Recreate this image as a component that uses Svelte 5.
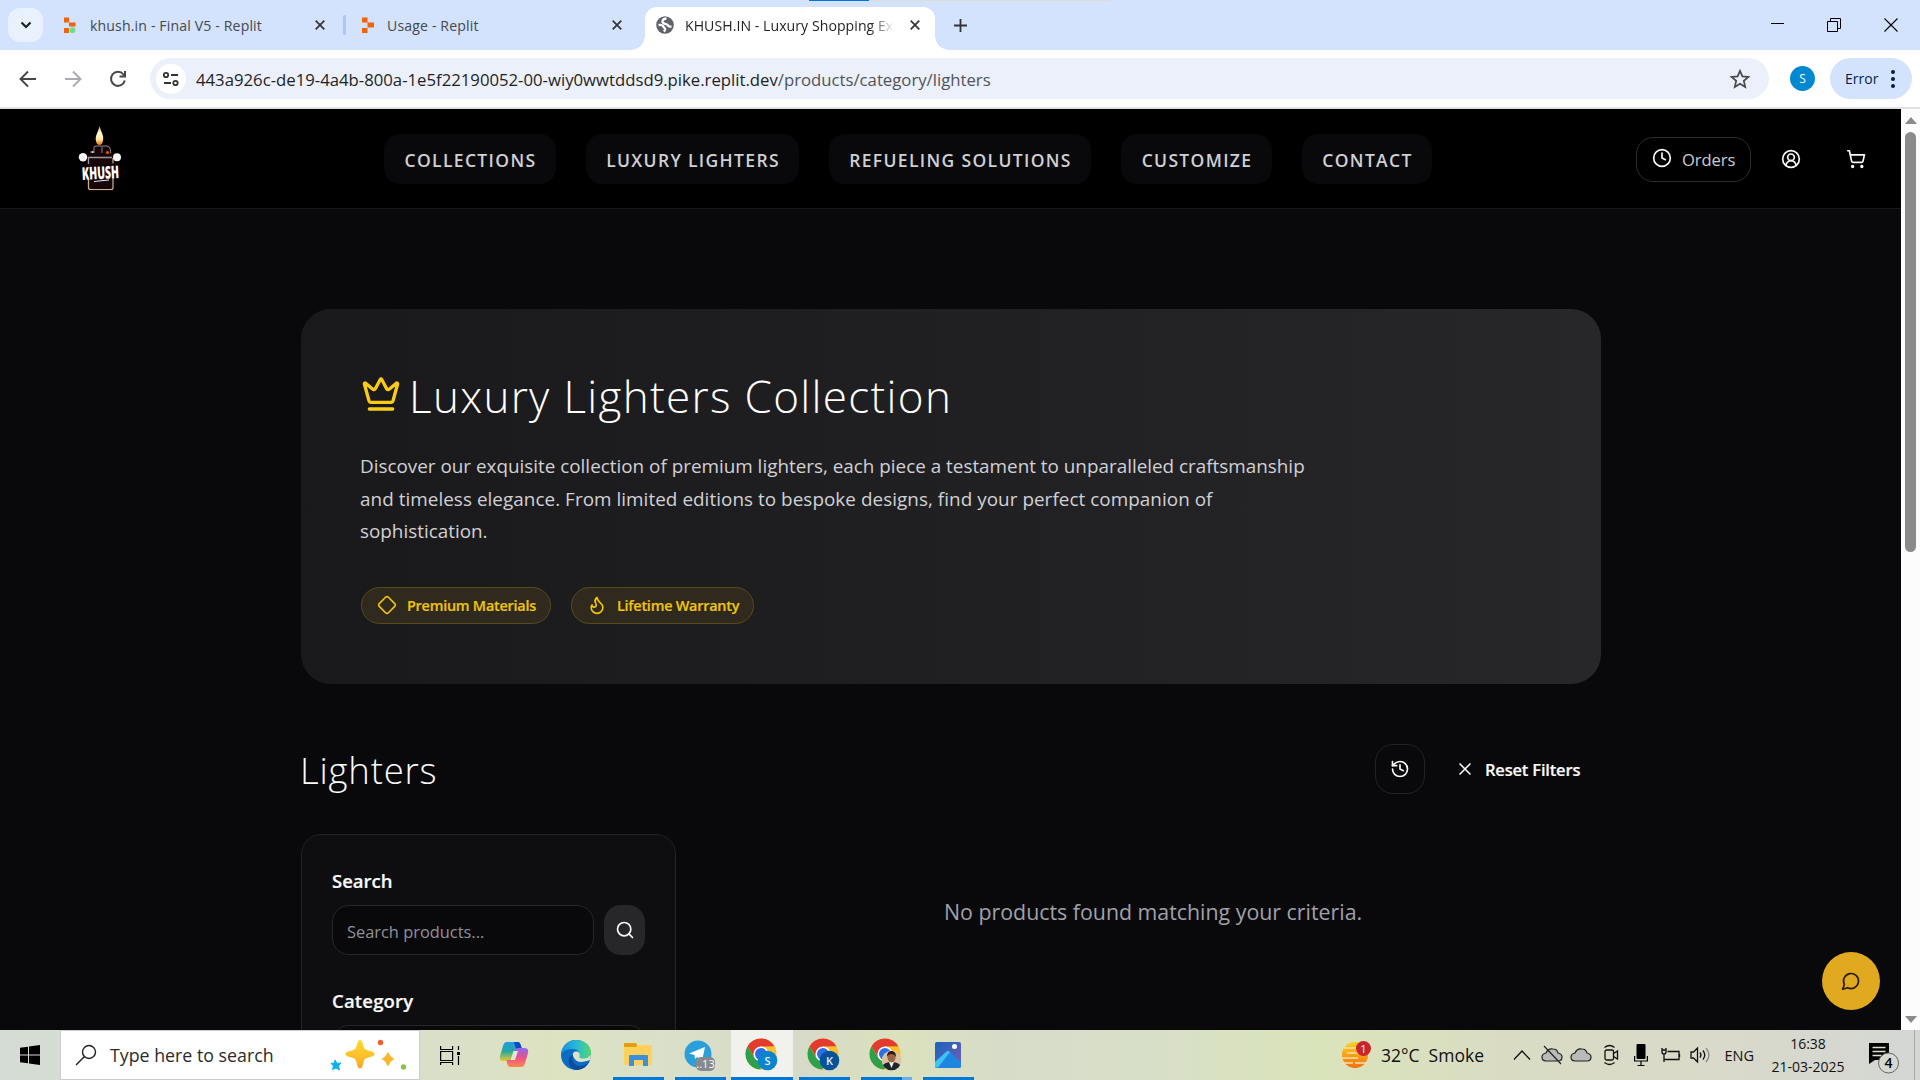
<script>
  const nav = [
    ['COLLECTIONS', 'n1'],
    ['LUXURY LIGHTERS', 'n2'],
    ['REFUELING SOLUTIONS', 'n3'],
    ['CUSTOMIZE', 'n4'],
    ['CONTACT', 'n5']
  ];
</script>

{#snippet closeIcon(cls)}
  <svg class={cls} width="10" height="10" viewBox="0 0 10 10"><path d="M.7.7l8.6 8.6M9.3.7L.7 9.3" stroke="currentColor" stroke-width="1.7" fill="none" /></svg>
{/snippet}

{#snippet chrome(id)}
  <svg width="34" height="34" viewBox="0 0 34 34">
    <circle cx="16" cy="16" r="15.5" fill="#fbc02d" />
    <path d="M2.6 8.2A15.5 15.5 0 0 1 29.4 8.2L16 8.5 9.4 20z" fill="#e33b2e" />
    <path d="M2.6 8.2L9.3 20 16 24l-.5 7.5A15.5 15.5 0 0 1 2.6 8.2z" fill="#2da04b" />
    <circle cx="16" cy="16" r="7.6" fill="#fff" />
    <circle cx="16" cy="16" r="6" fill="#2a6fe8" />
    {#if id === 'photo'}
      <defs><clipPath id="face"><circle cx="22.500" cy="22.500" r="9.800" /></clipPath></defs>
      <g clip-path="url(#face)">
        <rect x="12" y="12" width="21" height="21" fill="#d9c3a2" />
        <path d="M12 33c0-7 5-9 10.500-9s10.500 2 10.500 9z" fill="#20242c" />
        <path d="M20 24l2.500 6 2.500-6z" fill="#f2f2f2" />
        <ellipse cx="22.500" cy="19.500" rx="4" ry="5" fill="#9a6446" />
        <path d="M18 19c-.5-8 9.500-8 9 0-1.500-4-7.500-4-9 0z" fill="#231a16" />
      </g>
    {:else}
      <circle cx="22.500" cy="22.500" r="9.800" fill={id === 'S' ? '#0b84cf' : '#07529a'} />
      <text x="22.500" y="26.600" text-anchor="middle" font-size="11" font-weight="600" fill="#e5f3ff">{id}</text>
    {/if}
  </svg>
{/snippet}

<div class="screen">
  <header class="tabs">
    <button class="tabsearch" aria-label="Search tabs"><svg width="12" height="8" viewBox="0 0 12 8"><path d="M1.500 1.500L6 6l4.500-4.500" fill="none" stroke="#1f1f1f" stroke-width="2.200" /></svg></button>
    <div class="tab first">
      <svg width="14" height="17" viewBox="0 0 14 17"><path d="M1 .5h5v5h6.500v4H6V5.500H1zM1 11h5v5H1z" fill="#f26207" /><circle cx="9.500" cy="13.200" r="2.900" fill="#6fdc8c" /></svg>
      <span class="t1">khush.in - Final V5 - Replit</span>
      {@render closeIcon('x')}
    </div>
    <i class="divider"></i>
    <div class="tab second">
      <svg width="14" height="17" viewBox="0 0 14 17"><path d="M1 .5h5.500v5H13v5H6.500v5.500H1V11h5.500V5.500H1z" fill="#f26207" /></svg>
      <span class="t2">Usage - Replit</span>
      {@render closeIcon('x')}
    </div>
    <div class="tab active">
      <svg width="18" height="18" viewBox="0 0 18 18"><circle cx="9" cy="9" r="8.800" fill="#5f6368" /><path d="M10.500 2.500C8 2.500 6 4 6.500 6s3 1.500 4.500 2.500 1 2.500 4.500 2M2.500 9c2.500-.3 4.500.3 5 1.800.3 1.200 2 1.200 1.700 2.700-.2 1-.8 1.500-1.500 2" fill="none" stroke="#fff" stroke-width="2.300" /></svg>
      <span class="t3">KHUSH.IN - Luxury Shopping Ex</span>
      {@render closeIcon('x')}
    </div>
    <svg class="plus" width="13" height="13" viewBox="0 0 13 13"><path d="M6.500 0v13M0 6.500h13" stroke="#333" stroke-width="1.800" /></svg>
    <div class="win">
      <svg width="14" height="14" viewBox="0 0 14 14"><path d="M1 5.500h13" stroke="#000" /></svg>
      <svg width="14" height="14" viewBox="0 0 14 14" fill="none" stroke="#000"><path d="M.5 3.500h10v10H.5zM3.500 3V.5h10v10H11" /></svg>
      <svg width="14" height="14" viewBox="0 0 14 14"><path d="M.5.5l13 13M13.500.5l-13 13" stroke="#000" stroke-width="1.100" /></svg>
    </div>
    <i class="load"></i>
  </header>

  <div class="toolbar">
    <div class="navbtns">
      <svg width="18" height="18" viewBox="0 0 18 18" fill="none" stroke="#474747" stroke-width="1.900"><path d="M17 9H2M9 1.500L1.500 9 9 16.500" /></svg>
      <svg width="18" height="18" viewBox="0 0 18 18" fill="none" stroke="#a9abae" stroke-width="1.900"><path d="M1 9h15M9 1.500L16.500 9 9 16.500" /></svg>
      <svg width="18" height="18" viewBox="0 0 18 18" fill="none" stroke="#474747" stroke-width="2"><path d="M15.800 10.500A7 7 0 1 1 14.500 4.500L16 6M16 1v5.500h-5.500" /></svg>
    </div>
    <div class="omni">
      <span class="site"><svg width="18" height="16" viewBox="0 0 18 16" fill="none" stroke="#333" stroke-width="1.800"><circle cx="4" cy="4" r="2.200" /><path d="M9 4h7M2 12h7" /><circle cx="13.500" cy="12" r="2.200" /></svg></span>
      <span class="url">443a926c-de19-4a4b-800a-1e5f22190052-00-wiy0wwtddsd9.pike.replit.dev<em>/products/category/lighters</em></span>
      <svg class="star" width="20" height="20" viewBox="0 0 20 20"><path d="M10 1.800l2.400 5.600 6 .5-4.600 4 1.400 6L10 14.700l-5.200 3.200 1.400-6-4.600-4 6-.5z" fill="none" stroke="#474747" stroke-width="1.700" /></svg>
    </div>
    <span class="avatar">S</span>
    <span class="error"><b>Error</b><svg width="6" height="20" viewBox="0 0 6 20" fill="#041e49"><circle cx="3" cy="3" r="2" /><circle cx="3" cy="10" r="2" /><circle cx="3" cy="17" r="2" /></svg></span>
  </div>

  <div class="viewport">
    <div class="page">
      <nav>
        <svg class="logo" width="48" height="70" viewBox="0 0 48 70">
          <defs><linearGradient id="flame" x1="0" y1="0" x2="0" y2="1"><stop offset="0" stop-color="#f9a825" /><stop offset=".35" stop-color="#fff6d8" /><stop offset=".7" stop-color="#ffe9a0" /><stop offset="1" stop-color="#ef6c00" /></linearGradient></defs>
          <path d="M23.500 2c1.500 6 4.500 9 3.600 14-.5 3-1.600 5-3.600 5s-3.400-2-3.700-5C19.200 11 22.500 8 23.500 2z" fill="url(#flame)" />
          <path d="M11 31v36h26V31l-4-10H18l-3 8z" fill="#16060a" />
          <path d="M18 29v-5q0-2 2-2h11q3 0 3.500 4v3M26 23v6M14 28h4" fill="none" stroke="#8d8385" />
          <path d="M12.500 55v8.500q0 2 2 2h20.500q2 0 2-2V53M37 40v-6" fill="none" stroke="#c9b592" stroke-width="1.200" />
          <path d="M12.500 40v-6.500H36" fill="none" stroke="#a09698" stroke-width="1.300" />
          <circle cx="31.500" cy="28.500" r="1.600" fill="#e65100" /><circle cx="16.500" cy="28" r="1" fill="#ddd" />
          <circle cx="7" cy="33.300" r="4.200" fill="#f7f5f5" /><circle cx="41" cy="33.300" r="4" fill="#f7f5f5" />
          <path d="M5 42l38-3v13L6 56z" fill="#130406" />
          <text x="6" y="55" textLength="37" lengthAdjust="spacingAndGlyphs" font-size="17.500" font-weight="800" fill="#fff" transform="rotate(-3 24 50)">KHUSH</text>
          <path d="M18 57.500l15-1.500" stroke="#eee" />
        </svg>
        <ul>
          {#each nav as [label, cls]}<li class={cls}>{label}</li>{/each}
        </ul>
        <div class="acts">
          <span class="orders"><svg width="20" height="20" viewBox="0 0 24 24" class="lu"><circle cx="12" cy="12" r="10" /><path d="M12 6v6l4 2" /></svg><span>Orders</span></span>
          <svg width="20" height="20" viewBox="0 0 24 24" class="lu"><path d="M18 20a6 6 0 0 0-12 0" /><circle cx="12" cy="10" r="4" /><circle cx="12" cy="12" r="10" /></svg>
          <svg width="20" height="20" viewBox="0 0 24 24" class="lu"><circle cx="8" cy="21" r="1" /><circle cx="19" cy="21" r="1" /><path d="M2.050 2.050h2l2.660 12.420a2 2 0 0 0 2 1.580h9.780a2 2 0 0 0 1.950-1.570l1.650-7.430H5.120" /></svg>
        </div>
      </nav>

      <main>
        <section class="hero">
          <h1><svg width="40" height="40" viewBox="0 0 24 24" class="lu"><path d="M11.562 3.266a.5.5 0 0 1 .876 0L15.390 8.870a1 1 0 0 0 1.516.294L21.183 5.500a.5.5 0 0 1 .798.519l-2.834 10.246a1 1 0 0 1-.956.734H5.810a1 1 0 0 1-.957-.734L2.020 6.020a.5.5 0 0 1 .798-.519l4.276 3.664a1 1 0 0 0 1.516-.294z" /><path d="M5 21h14" /></svg><span>Luxury Lighters Collection</span></h1>
          <p><span class="l1">Discover our exquisite collection of premium lighters, each piece a testament to unparalleled craftsmanship</span><br /><span class="l2">and timeless elegance. From limited editions to bespoke designs, find your perfect companion of</span><br /><span class="l3">sophistication.</span></p>
          <div class="badges">
            <span class="b1"><svg width="20" height="20" viewBox="0 0 24 24" class="lu"><path d="M2.700 10.300a2.410 2.410 0 0 0 0 3.410l7.590 7.590a2.410 2.410 0 0 0 3.410 0l7.590-7.590a2.410 2.410 0 0 0 0-3.410l-7.590-7.590a2.410 2.410 0 0 0-3.410 0Z" /></svg>Premium Materials</span>
            <span class="b2"><svg width="20" height="20" viewBox="0 0 24 24" class="lu"><path d="M8.500 14.500A2.500 2.500 0 0 0 11 12c0-1.380-.5-2-1-3-1.072-2.143-.224-4.054 2-6 .5 2.500 2 4.900 4 6.500 2 1.600 3 3.500 3 5.500a7 7 0 1 1-14 0c0-1.153.433-2.294 1-3a2.500 2.500 0 0 0 2.500 2.500z" /></svg>Lifetime Warranty</span>
          </div>
        </section>
        <div class="head">
          <h2>Lighters</h2>
          <span class="hist"><svg width="20" height="20" viewBox="0 0 24 24" class="lu"><path d="M3 12a9 9 0 1 0 9-9 9.750 9.750 0 0 0-6.740 2.740L3 8" /><path d="M3 3v5h5" /><path d="M12 7v5l4 2" /></svg></span>
          <span class="reset"><svg width="20" height="20" viewBox="0 0 24 24" class="lu"><path d="M18 6L6 18M6 6l12 12" /></svg><span>Reset Filters</span></span>
        </div>
        <div class="grid">
          <aside>
            <h3 class="s">Search</h3>
            <div class="row"><div class="input">Search products...</div><span class="go"><svg width="20" height="20" viewBox="0 0 24 24" class="lu"><circle cx="11" cy="11" r="8" /><path d="M21 21l-4.300-4.300" /></svg></span></div>
            <h3 class="c">Category</h3>
            <div class="select"></div>
          </aside>
          <div class="empty"><span>No products found matching your criteria.</span></div>
        </div>
      </main>
      <span class="chat"><svg width="20" height="20" viewBox="0 0 24 24" class="lu"><path d="M7.900 20A9 9 0 1 0 4 16.100L2 22Z" /></svg></span>
    </div>
    <div class="scroll"><i class="up"></i><i class="thumb"></i><i class="down"></i></div>
  </div>

  <footer>
    <span class="start"><svg width="20" height="20" viewBox="0 0 20 20"><path d="M0 2.800L8 1.700v7.800H0zM9 1.500L20 0v9.500H9zM0 10.500h8v7.800l-8-1.100zM9 10.500h11V20L9 18.500z" /></svg></span>
    <div class="find">
      <svg width="22" height="22" viewBox="0 0 22 22" fill="none" stroke="#222" stroke-width="1.400"><circle cx="14" cy="8" r="6.500" /><path d="M9.500 12.500L1 21" /></svg>
      <span>Type here to search</span>
      <svg class="spark" width="78" height="34" viewBox="0 0 78 34">
        <defs><linearGradient id="gold" x1="0" y1="0" x2="0" y2="1"><stop offset="0" stop-color="#ffdd2e" /><stop offset="1" stop-color="#f7a928" /></linearGradient></defs>
        <path d="M30 2c2 0 2.500 2 3.500 6 1 3 1.500 3.500 5 4.500 4 1 6 1.500 6 3.500s-2 2.500-6 3.500c-3.500 1-4 1.500-5 5-1 4-1.500 6-3.500 6s-2.500-2-3.500-6c-1-3.500-1.500-4-5-5-4-1-6-1.500-6-3.500s2-2.500 6-3.500c3.500-1 4-1.500 5-4.500 1-4 1.500-6 3.500-6z" fill="url(#gold)" />
        <path d="M58 14.500c1.500 0 1.500 5 7 6.500-5.500 1.500-5.500 7-7 7s-1.500-5.500-7-7c5.500-1.500 5.500-6.500 7-6.500z" fill="#f9b82c" />
        <path d="M5 22l2 3.500 4-.5-2.500 3 1 4-3.500-2-3.500 1.500 1-3.500L1 25.500l3.500-.5z" fill="#0db0ee" stroke="#0db0ee" stroke-linejoin="round" />
        <circle cx="50.500" cy="4.500" r="2.700" fill="#f0602c" /><circle cx="73.500" cy="29" r="2.700" fill="#8bc53f" />
      </svg>
    </div>
    <span class="cell task"><svg width="20" height="19" viewBox="0 0 20 19" fill="none" stroke="#000" stroke-width="1.200"><path d="M.6 5.500h12v9H.6zM.6 0v3.500h12V0M.6 19v-2.500h12V19M18.500 0v4M18.500 10v9" /><path d="M17 6h3v3h-3z" fill="#000" stroke="none" /></svg></span>
    <span class="cell"><svg width="30" height="28" viewBox="0 0 30 28">
      <defs><linearGradient id="cpa" x1="0" y1="0" x2="0" y2="1"><stop offset="0" stop-color="#1a9fe8" /><stop offset=".5" stop-color="#2aa7a0" /><stop offset="1" stop-color="#e8cc2a" /></linearGradient><linearGradient id="cpb" x1="0" y1="0" x2="0" y2="1"><stop offset="0" stop-color="#8b6cf0" /><stop offset=".5" stop-color="#ec4f8c" /><stop offset="1" stop-color="#fb8a4a" /></linearGradient></defs>
      <path d="M8 1h11q2 0 3 4l1 3h-5q-2 0-3 3l-2 6q-1 3-4 3H4q-4 0-3-5L4 5q1-4 4-4z" fill="url(#cpa)" />
      <path d="M15 1h4q2 0 3 4l1 3h-6z" fill="#1547c4" />
      <path d="M22 26H11q-2 0-3-4l-.500-3H9q3 0 4-3l2-6q1-3 4-3h6q5 0 4 5l-3 10q-1 4-4 4z" fill="url(#cpb)" />
      <path d="M14.500 10h4.500l-3 9h-4.500z" fill="#dfe6cf" />
    </svg></span>
    <span class="cell"><svg width="30" height="30" viewBox="0 0 30 30">
      <defs><linearGradient id="ed" x1="0" x2="1"><stop offset="0" stop-color="#1a8fe0" /><stop offset=".5" stop-color="#27b8d8" /><stop offset="1" stop-color="#55d868" /></linearGradient></defs>
      <circle cx="15" cy="15" r="15" fill="#0c6cc4" />
      <path d="M0 14C1 5 8 0 15 0c9 0 15 6 15 12 0 5-4 7-8 7-3 0-4-1-3.500-2C20 12 16 8.500 11 9 5 9 1 12 0 14z" fill="url(#ed)" />
      <path d="M12 15c-2 5 1 11 7 11 4 0 7-2 9-4-3 6-8 8-13 8-6-1-8-7-7-11 .5-2 2-3.500 4-4z" fill="#0b4c9c" />
      <path d="M18.500 17C20 13 17 11 14.500 11.500c-3 .5-3 3.500-2 5.500 1.500 4 6 6 11 4.500l6-1.500.5-5.500-3 3c-4 2-8 1-8.500-.5z" fill="#dce4c8" />
    </svg></span>
    <span class="cell run"><svg width="28" height="24" viewBox="0 0 28 24"><path d="M0 1q0-1 1-1h10q2 0 2 2v4H0z" fill="#e0a008" /><path d="M0 4h12l2-2h13q1 0 1 1v18q0 1-1 1H1q-1 0-1-1z" fill="#ffd05a" /><path d="M5 23V13q0-1 1-1h17q1 0 1 1v10h-5v-6h-9v6z" fill="#3c8fdc" /></svg></span>
    <span class="cell run tele"><svg width="34" height="32" viewBox="0 0 34 32"><circle cx="15" cy="15" r="13.500" fill="#2b9fda" /><path d="M6 14.500L22 8l-3 14-5-4-2 2-.5-4z" fill="#fff" /><rect x="13" y="18" width="19" height="14" rx="5" fill="#858a8c" /><text x="22.500" y="29" text-anchor="middle" font-size="11" fill="#fff">..13</text></svg></span>
    <span class="cell run on">{@render chrome('S')}</span>
    <span class="cell run">{@render chrome('K')}</span>
    <span class="cell run two">{@render chrome('photo')}</span>
    <span class="cell run"><svg width="26" height="26" viewBox="0 0 26 26"><defs><linearGradient id="ph" x1="0" y1="0" x2="1" y2="1"><stop offset="0" stop-color="#1464c0" /><stop offset="1" stop-color="#7c5bb0" /></linearGradient></defs><rect width="26" height="26" rx="2" fill="url(#ph)" /><path d="M0 20L11 10q2-2 4 0l11 10v4q0 2-2 2H2q-2 0-2-2z" fill="#1f86e0" /><path d="M0 20L11 10q2-2 4 0L3 25.500Q0 26 0 24z" fill="#3cc4f5" /><circle cx="19.500" cy="4.500" r="2.500" fill="#fff" /></svg></span>

    <div class="weather"><svg width="30" height="28" viewBox="0 0 30 28"><defs><linearGradient id="sun" x1="0" y1="0" x2="0" y2="1"><stop offset="0" stop-color="#fdd21a" /><stop offset="1" stop-color="#f36f10" /></linearGradient></defs><circle cx="14" cy="14" r="13" fill="url(#sun)" /><path d="M3 7h12M6 12h18M1 17h16M0 22h12M14 22h12" stroke="#f8dfae" stroke-width="1.500" /><circle cx="22.500" cy="7.500" r="7.500" fill="#c9252b" /><text x="22.500" y="11.500" text-anchor="middle" font-size="11" fill="#fff">1</text></svg><span>32°C&nbsp; Smoke</span></div>
    <div class="tray">
      <svg width="18" height="12" viewBox="0 0 18 12" fill="none" stroke="#111" stroke-width="1.300"><path d="M1 10.500L9 2l8 8.500" /></svg>
      <svg width="22" height="20" viewBox="0 0 22 20" fill="#b9bbb9" stroke="#222" stroke-width="1.200"><path d="M5 16q-4 0-4-4 0-3 4-4 2-5 7-4 4 0 5 4 4 1 4 4 0 4-4 4zM3 1l17 18" /></svg>
      <svg width="22" height="20" viewBox="0 0 22 20" fill="#b9bbb9" stroke="#222" stroke-width="1.200"><path d="M5 16q-4 0-4-4 0-3 4-4 2-5 7-4 4 0 5 4 4 1 4 4 0 4-4 4z" /></svg>
      <svg width="16" height="22" viewBox="0 0 16 22" fill="none" stroke="#111" stroke-width="1.300"><rect x="2" y="6" width="8.500" height="10" rx="1.500" /><path d="M10.500 9.500L14.500 7v8l-4-2.500M1.500 3.500Q6.500-.5 11.500 3.500M1.500 18.500q5 4 10 0" /></svg>
      <svg width="14" height="24" viewBox="0 0 14 24"><rect x="2.500" y="1" width="9" height="15" rx="1" /><path d="M.6 13v5h12.800v-5M7 18v4M3.500 22.500h7" fill="none" stroke="#000" stroke-width="1.200" /></svg>
      <svg width="20" height="16" viewBox="0 0 20 16" fill="none" stroke="#111" stroke-width="1.300"><path d="M6.500 4.500H18v8H5M18.500 7v3M1 1v4q0 2 2 2t2-2V1M3 7v8M.5 3h5M3 12.500h3" /></svg>
      <svg width="21" height="18" viewBox="0 0 21 18" fill="none" stroke="#111" stroke-width="1.300"><path d="M1 6v6h2.500L7.500 16V2L3.500 6zM10 6.500q2 2.500 0 5M13 4.500q3.500 4.500 0 9" /><path d="M16 2q6 7 0 14" stroke="#888" /></svg>
    </div>
    <span class="eng">ENG</span>
    <div class="clock"><span class="tm">16:38</span><span class="dt">21-03-2025</span></div>
    <svg class="note" width="30" height="32" viewBox="0 0 30 32"><path d="M0 1h20v17H6l-6 4z" /><path d="M3.500 5.500h13M3.500 9.500h13M3.500 13.500h9" stroke="#dde0d0" stroke-width="1.300" /><circle cx="19.500" cy="21" r="10" fill="#d6d8d2" stroke="#666" /><text x="19.500" y="26" text-anchor="middle" font-size="14" font-weight="600">4</text></svg>
    <i class="peek"></i>
  </footer>
</div>

<style>
  :global(body) { margin: 0; background: #09090b; }
  .screen { width: 1920px; height: 1080px; overflow: hidden; display: flex; flex-direction: column; font-family: 'Open Sans', 'Noto Sans', sans-serif; }
  .screen * { box-sizing: border-box; }
  svg { display: block; flex: none; overflow: visible; }
  span, li, h1, h2, h3, b { white-space: nowrap; }
  h1, h2, h3, p, ul { margin: 0; padding: 0; font-weight: 400; }
  .lu { fill: none; stroke: currentColor; stroke-width: 2; stroke-linecap: round; stroke-linejoin: round; }

  .tabs { position: relative; height: 50px; background: #d3e3fd; display: flex; align-items: center; flex: none; }
  .tabsearch { width: 35px; height: 34px; border: 0; border-radius: 12px; background: #e9f1fe; margin-left: 8px; padding: 0; display: flex; align-items: center; justify-content: center; }
  .tab { display: flex; align-items: center; height: 34px; font-size: 14.100px; letter-spacing: .140px; color: #45484d; }
  .tab span { overflow: hidden; }
  .x { margin-left: auto; color: #333; }
  .first { width: 262px; margin-left: 20px; gap: 13px; }
  .divider { width: 3px; height: 20px; margin-left: 18px; background: #a8c7fa; border-radius: 2px; }
  .second { width: 261px; margin-left: 15px; gap: 12px; }
  .active { position: relative; width: 290px; height: 43px; margin: 7px 0 0 23px; padding: 0 15px 7px 11px; gap: 11px; background: #fff; border-radius: 12px 12px 0 0; color: #1f1f1f; letter-spacing: .050px; }
  .active::before, .active::after { content: ''; position: absolute; bottom: 0; width: 14px; height: 14px; }
  .active::before { left: -14px; background: radial-gradient(circle at 0 0, transparent 13.500px, #fff 14px); }
  .active::after { right: -14px; background: radial-gradient(circle at 100% 0, transparent 13.500px, #fff 14px); }
  .t3 { width: 211px; -webkit-mask: linear-gradient(90deg, #000 185px, transparent 209px); mask: linear-gradient(90deg, #000 185px, transparent 209px); }
  .plus { margin-left: 19px; }
  .win { margin-left: auto; margin-right: 22px; display: flex; gap: 43px; }
  .load { position: absolute; left: 809px; top: 0; width: 301px; height: 1px; background: linear-gradient(90deg, #0078d7 60px, #dcdcdc 60px); }

  .toolbar { height: 59px; flex: none; background: #fff; border-bottom: 2px solid #dfe3e1; display: flex; align-items: center; }
  .navbtns { display: flex; gap: 27px; margin-left: 19px; }
  .omni { display: flex; align-items: center; width: 1619px; height: 41px; margin-left: 23px; padding: 0 19px 0 6px; border-radius: 21px; background: #ebf0fa; }
  .site { width: 30px; height: 30px; border-radius: 50%; background: #fff; display: flex; align-items: center; justify-content: center; }
  .url { margin: 1px 0 0 10px; font-size: 16.730px; color: #1f1f1f; }
  .url em { font-style: normal; color: #50545a; }
  .star { margin-left: auto; }
  .avatar { width: 25px; height: 25px; margin-left: 21px; border-radius: 50%; background: #0288d1; color: #fff; font-size: 12px; display: flex; align-items: center; justify-content: center; }
  .error { width: 82px; height: 41px; margin-left: 15px; padding: 0 16px 0 15px; border-radius: 21px; background: #d3e3fd; color: #041e49; display: flex; align-items: center; justify-content: space-between; }
  .error b { font-size: 14px; font-weight: 400; }

  .viewport { height: 921px; flex: none; display: flex; overflow: hidden; }
  .page { position: relative; width: 1901px; background: #09090b; color: #fafafa; overflow: hidden; }
  nav { height: 100px; background: #000; border-bottom: 1px solid #18181b; display: flex; align-items: center; }
  .logo { margin-left: 76px; }
  ul { list-style: none; display: flex; gap: 30px; margin-left: 260px; }
  li { height: 50px; padding-top: 2px; border-radius: 16px; background: #09090b; color: #d0d0d3; font-size: 17.500px; font-weight: 600; letter-spacing: 1.340px; text-indent: 1px; display: flex; align-items: center; justify-content: center; }
  .n1 { width: 172px; } .n2 { width: 213px; } .n3 { width: 262px; } .n4 { width: 151px; } .n5 { width: 130px; }
  .acts { display: flex; align-items: center; margin-left: 204px; }
  .acts > svg { margin-left: 30px; }
  .acts > svg:last-child { margin-left: 45px; }
  .orders { width: 115px; height: 45px; margin-top: 1px; border: 1px solid #2c2c2f; border-radius: 17px; padding-left: 15px; display: flex; align-items: center; gap: 10px; font-size: 16.600px; letter-spacing: -.100px; }
  .orders svg { margin-top: -2px; }
  .orders span { color: #cdcdd0; margin-top: 1px; }

  main { width: 1300px; margin-left: 301px; }
  .hero { margin-top: 100px; height: 375px; border-radius: 30px; padding: 60px 59px; background: linear-gradient(90deg, #19191b, #27272a); }
  h1 { display: flex; align-items: center; height: 54px; font-size: 44px; font-weight: 300; letter-spacing: 1.320px; color: #fff; }
  h1 svg { color: #facc15; margin-right: 8px; margin-left: 1px; margin-top: -4px; }
  .hero p { margin-top: 27px; font-size: 18.870px; line-height: 32.500px; color: #d1d1d5; }
  .l1 { letter-spacing: 0; }
  .l2 { letter-spacing: .050px; }
  .badges { display: flex; gap: 20px; margin: 39px 0 0 1px; }
  .badges span { height: 37px; border: 1px solid #574b1b; border-radius: 19px; background: #30291d; color: #eec40f; display: flex; align-items: center; gap: 10px; padding-left: 15px; font-size: 14.400px; font-weight: 600; letter-spacing: -.230px; -webkit-text-stroke: .200px; }
  .b1 { width: 190px; } .b2 { width: 183px; }
  .head { display: flex; align-items: center; height: 50px; margin-top: 60px; }
  h2 { font-size: 36.500px; font-weight: 300; letter-spacing: .800px; margin: 2px auto 0 -1px; }
  .hist { width: 50px; height: 50px; border: 1px solid #232326; border-radius: 18px; display: flex; align-items: center; justify-content: center; }
  .reset { display: flex; align-items: center; gap: 10px; margin-left: 30px; width: 146px; font-size: 16.500px; font-weight: 600; letter-spacing: -.180px; -webkit-text-stroke: .200px; }
  .grid { display: flex; margin-top: 40px; }
  aside { width: 375px; height: 400px; border: 1px solid #232326; border-radius: 20px; background: #0e0e10; padding: 29px 29px 29px 30px; }
  h3 { font-size: 18.500px; line-height: 34px; font-weight: 600; -webkit-text-stroke: .200px; }
  .row { display: flex; gap: 10px; margin-top: 7px; }
  .input { width: 262px; height: 50px; border: 1px solid #27272a; border-radius: 17px; background: #09090b; color: #919199; font-size: 16.400px; line-height: 51px; padding-left: 14px; }
  .go { width: 41px; height: 50px; border-radius: 17px; background: #27272a; display: flex; align-items: center; justify-content: center; }
  .c { margin-top: 29px; letter-spacing: .180px; }
  .select { margin-top: 7px; height: 50px; border: 1px solid #27272a; border-radius: 17px; background: #09090b; }
  .empty { flex: 1; padding: 61px 0 0 268px; font-size: 21.350px; line-height: 34px; color: #a1a1aa; }
  .chat { position: absolute; left: 1822px; top: 843px; width: 58px; height: 58px; border-radius: 50%; background: #e1a91f; color: #2a1f06; display: flex; align-items: center; justify-content: center; }
  .scroll { width: 19px; background: #fcfcfc; display: flex; flex-direction: column; align-items: center; }
  .scroll i { flex: none; }
  .up { margin-top: 8px; border: 6.500px solid transparent; border-top: 0; border-bottom: 7px solid #8b8b8b; }
  .thumb { width: 11px; height: 420px; margin-top: 8px; border-radius: 6px; background: #8b8b8b; }
  .down { margin-top: auto; margin-bottom: 7px; border: 6.500px solid transparent; border-bottom: 0; border-top: 7px solid #8b8b8b; }

  footer { height: 50px; flex: none; display: flex; align-items: center; color: #111; background: linear-gradient(90deg, #d5dcd5 0, #d9dfc9 420px, #dde3c1 560px, #dae0c9 660px, #d6dac8 800px, #dbe1bd 900px, #d7dcc9 1000px, #d8dfc8 1150px, #dae4ba 1320px, #d9dcc3 1500px, #d9dac9 1700px, #d4d6d4 1920px); }
  .start { width: 60px; padding-left: 20px; }
  .find { width: 360px; height: 50px; border: 1px solid #cbcdca; background: #fff; display: flex; align-items: center; padding-left: 14px; }
  .find span { margin-left: 13px; font-size: 17.800px; color: #2b2b2b; }
  .spark { margin-left: auto; margin-right: 11px; }
  .cell { position: relative; height: 50px; width: 62px; display: flex; align-items: center; justify-content: center; }
  .task { width: 60px; margin-right: 3px; }
  .run::after { content: ''; position: absolute; left: 6px; right: 5px; bottom: 0; height: 3px; background: #0078d7; }
  .on { background: #f1f2ed; }
  .on::after { left: 0; right: 0; }
  .two::after { background: linear-gradient(90deg, #0078d7 41px, #6aaeea 41px); }
  .weather { display: flex; align-items: center; gap: 10px; margin-left: 362px; font-size: 17.500px; }
  .tray { display: grid; grid-template-columns: repeat(7, 29.800px); align-items: center; justify-items: center; margin-left: auto; }
  .eng { font-size: 14.500px; margin-left: 9px; }
  .clock { width: 78px; margin-left: 15px; display: flex; flex-direction: column; align-items: center; font-size: 14px; line-height: 23px; }
  .note { margin: 5px 0 0 22px; }
  .peek { width: 1px; height: 50px; margin-left: 15px; margin-right: 5px; background: #a9aca6; }
</style>
